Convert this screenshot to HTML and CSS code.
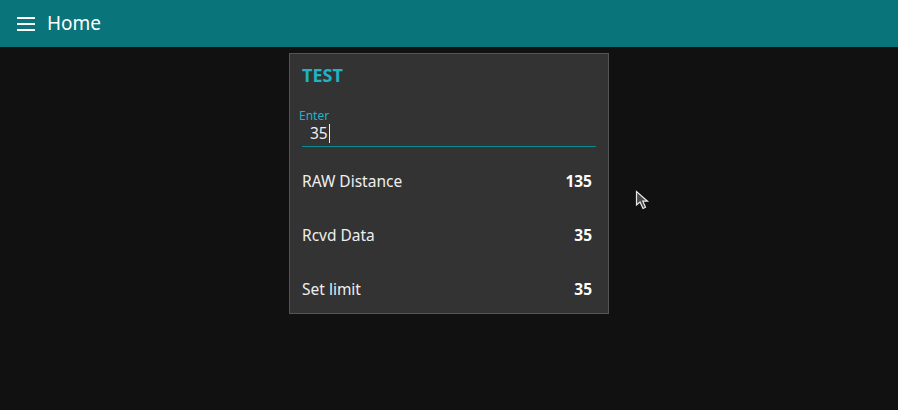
FILE: index.html
```html
<!DOCTYPE html>
<html>
<head>
<meta charset="utf-8">
<link rel="stylesheet" href="styles.css">
</head>
<body>
<header class="toolbar">
  <svg class="menu-icon" width="18" height="14" viewBox="0 0 18 14"><rect x="0" y="0" width="18" height="2" fill="#fff"/><rect x="0" y="6" width="18" height="2" fill="#fff"/><rect x="0" y="12" width="18" height="2" fill="#fff"/></svg>
  <span class="title">Home</span>
</header>
<main class="content">
  <section class="card">
    <div class="card-title">TEST</div>
    <div class="widget input-widget">
      <label class="input-label">Enter</label>
      <div class="input-value">35<span class="caret"></span></div>
      <div class="input-line"></div>
    </div>
    <div class="widget row"><span class="label">RAW Distance</span><span class="value">135</span></div>
    <div class="widget row"><span class="label">Rcvd Data</span><span class="value">35</span></div>
    <div class="widget row"><span class="label">Set limit</span><span class="value">35</span></div>
  </section>
</main>
<svg class="pointer" width="16" height="22" viewBox="0 0 16 22"><path d="M1.5 1.5 L1.5 15 L5 12 L8 18.5 L10.5 17.3 L7.8 11.2 L12.5 11.2 Z" fill="#4a4a4a" stroke="#e8e8e8" stroke-width="1.2" stroke-linejoin="miter"/></svg>
</body>
</html>
```
FILE: styles.css
```css
html, body {
  margin: 0;
  padding: 0;
  background: #111111;
  font-family: "Noto Sans", "Open Sans", sans-serif;
  color: #eeeeee;
  height: 100%;
  overflow: hidden;
}
.toolbar {
  height: 47px;
  background: #097479;
  display: flex;
  align-items: center;
  padding-left: 17px;
  box-sizing: border-box;
}
.menu-icon {
  display: block;
  margin-right: 12px;
  margin-top: 1px;
}
.title {
  font-size: 19px;
  color: #ffffff;
  line-height: 1;
}
.content {
  display: flex;
  padding: 6px 0 0 289px;
}
.card {
  width: 320px;
  height: 261px;
  box-sizing: border-box;
  background: #333333;
  border: 1px solid #555555;
  padding: 0 12px;
  display: flex;
  flex-direction: column;
  gap: 6px;
}
.card-title {
  height: 43px;
  line-height: 43px;
  font-size: 18px;
  font-weight: bold;
  color: #1eb4c3;
}
.widget {
  height: 48px;
  flex: none;
}
.input-label {
  display: block;
  font-size: 12px;
  color: #1eb4c3;
  margin-left: -3px;
  padding-top: 6px;
  line-height: 14px;
}
.input-value {
  font-size: 15.5px;
  line-height: 20px;
  margin-left: 8px;
  color: #eeeeee;
  display: flex;
  align-items: center;
}
.caret {
  display: inline-block;
  width: 1px;
  height: 19px;
  background: #eeeeee;
  margin-left: 1px;
}
.input-line {
  height: 1px;
  background: #0c8a91;
  margin-top: 3px;
}
.row {
  display: flex;
  align-items: center;
  justify-content: space-between;
  font-size: 15.5px;
  padding-right: 4px;
}
.value {
  font-weight: bold;
  color: #ffffff;
}
.pointer {
  position: absolute;
  left: 635px;
  top: 190px;
}
```
